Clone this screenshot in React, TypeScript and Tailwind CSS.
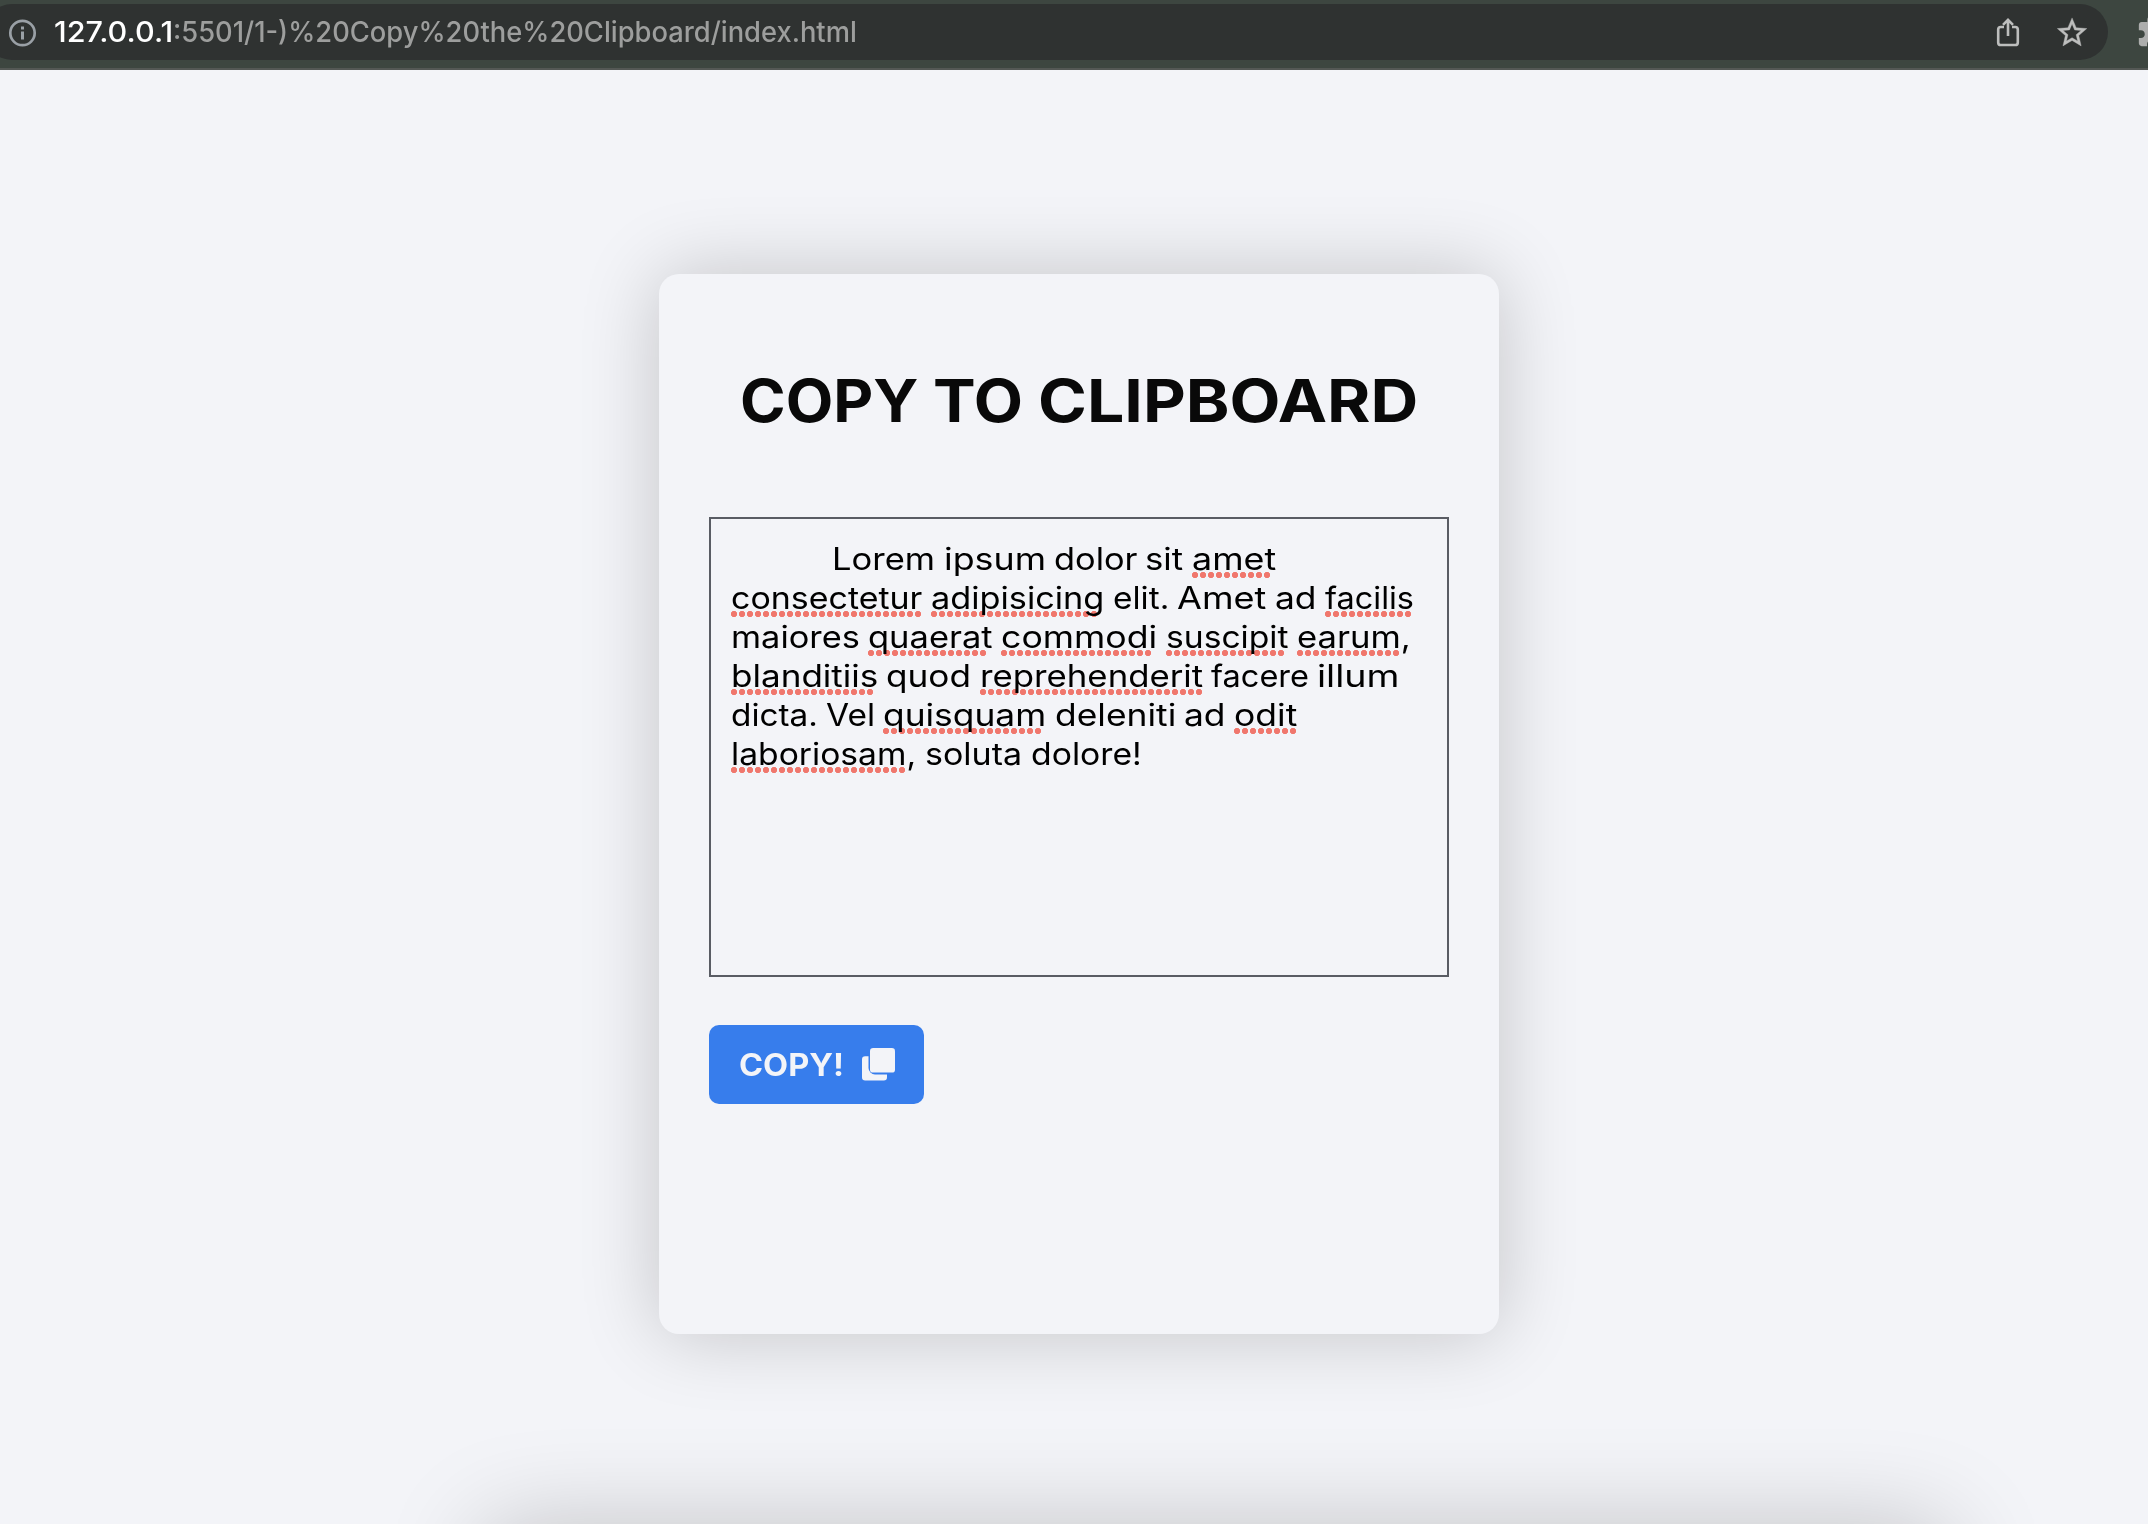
import { useLayoutEffect, useRef } from "react";

/** Text stretched horizontally so that it fills exactly `width` pixels. */
function Fit({ text, width, className = "" }: { text: string; width: number; className?: string }) {
  const ref = useRef<HTMLSpanElement>(null);
  useLayoutEffect(() => {
    const el = ref.current;
    if (!el) return;
    el.style.transform = `scaleX(${width / el.offsetWidth})`;
  }, [text, width]);
  return (
    <span className="block shrink-0" style={{ width }}>
      <span ref={ref} className={`inline-block origin-left whitespace-pre ${className}`}>
        {text}
      </span>
    </span>
  );
}

// [word, left offset inside the text column, number of spell-check dots]
type Word = [string, number, number];
type Line = { end: number; words: Word[] };

const lines: Line[] = [
  { end: 545.5, words: [["Lorem", 101, 0], ["ipsum", 213, 0], ["dolor", 323, 0], ["sit", 414.5, 0], ["amet", 461, 10]] },
  { end: 683, words: [["consectetur", 0, 24], ["adipisicing", 200, 21], ["elit.", 382, 0], ["Amet", 446.5, 0], ["ad", 544.5, 0], ["facilis", 594, 11]] },
  { end: 680, words: [["maiores", 0, 0], ["quaerat", 137, 15], ["commodi", 270, 19], ["suscipit", 435, 15], ["earum,", 566, 13]] },
  { end: 669, words: [["blanditiis", 0, 18], ["quod", 155.5, 0], ["reprehenderit", 249, 28], ["facere", 480.5, 0], ["illum", 586.5, 0]] },
  { end: 566, words: [["dicta.", 0, 0], ["Vel", 95.5, 0], ["quisquam", 152.5, 20], ["deleniti", 324, 0], ["ad", 453.5, 0], ["odit", 503, 8]] },
  { end: 411, words: [["laboriosam,", 0, 22], ["soluta", 194, 0], ["dolore!", 300, 0]] },
];

const SPACE = 8.4;

function TextLine({ line }: { line: Line }) {
  return (
    <div className="flex h-[39px]" style={{ paddingLeft: line.words[0][1] }}>
      {line.words.map(([text, x, dots], i) => {
        const next = line.words[i + 1];
        const width = next ? next[1] - x - SPACE : line.end - x;
        return (
          <span key={i} className="relative shrink-0" style={{ marginRight: next ? SPACE : 0 }}>
            <Fit text={text} width={width} />
            {dots > 0 && (
              <span
                className="absolute top-[33px] left-0 h-[6px] bg-[radial-gradient(circle_at_3px_3px,#fc7c70_2.8px,transparent_3.5px)] bg-[length:8px_6px] bg-repeat-x mix-blend-multiply"
                style={{ width: dots * 8 - 1 }}
              />
            )}
          </span>
        );
      })}
    </div>
  );
}

function AddressBar() {
  return (
    <header className="flex h-[70px] shrink-0 overflow-hidden border-b-2 border-[#545855] bg-[#3d4640] pt-1">
      <div className="-ml-[16px] flex h-14 w-[2124px] shrink-0 items-center rounded-full bg-[#2f3231] pl-[24px]">
        <svg className="h-[29px] w-[29px] shrink-0" viewBox="0 0 29 29" fill="none">
          <circle cx="14.5" cy="15" r="12.2" stroke="#9aa0a6" strokeWidth="2.7" />
          <path d="M14.5 13.500v8M14.500 8.500v3" stroke="#9aa0a6" strokeWidth="3" />
        </svg>
        <div className="ml-[17px] flex flex-1 text-[28px] leading-[34px]">
          <Fit text="127.0.0.1" width={119} className="font-medium text-white" />
          <Fit text=":5501/1-)%20Copy%20the%20Clipboard/index.html" width={684} className="font-medium text-[#9d9e9d]" />
        </div>
        <svg className="mr-[37px] h-[30px] w-[24px]" viewBox="0 0 24 30" fill="none" stroke="#bdbebd" strokeWidth="2.6">
          <path d="M8 10H4.8a2.600 2.600 0 0 0-2.600 2.600v12.800a2.600 2.600 0 0 0 2.600 2.600h14.400a2.600 2.600 0 0 0 2.600-2.600V12.600a2.600 2.600 0 0 0-2.600-2.600H16" />
          <path d="M12 19V3M7 7.800l5-5 5 5" />
        </svg>
        <svg className="mr-[20px] h-[31px] w-[31px]" viewBox="1.800 1.400 21 21" fill="#bdbebd" stroke="#bdbebd" strokeWidth="0.25">
          <path d="M22 9.24l-7.19-.62L12 2 9.19 8.63 2 9.24l5.46 4.73L5.82 21 12 17.27 18.18 21l-1.63-7.03L22 9.24zM12 15.4l-3.76 2.27 1-4.28-3.32-2.88 4.38-.38L12 6.1l1.71 4.04 4.38.38-3.32 2.88 1 4.28L12 15.4z" />
        </svg>
      </div>
      <svg className="mt-[11px] ml-[28px] h-[34px] w-[34px] shrink-0" viewBox="0 0 24 24" fill="#adaead">
        <path d="M20.5 11H19V7c0-1.1-.9-2-2-2h-4V3.5a2.5 2.5 0 0 0-5 0V5H4c-1.1 0-1.99.9-1.99 2v3.8H3.5c1.49 0 2.7 1.21 2.7 2.7s-1.21 2.7-2.7 2.7H2V20c0 1.1.9 2 2 2h3.8v-1.5c0-1.49 1.21-2.7 2.7-2.7s2.7 1.21 2.7 2.7V22H17c1.1 0 2-.9 2-2v-4h1.5a2.5 2.5 0 0 0 0-5z" />
      </svg>
    </header>
  );
}

export default function App() {
  return (
    <div className="relative flex h-[1524px] w-[2148px] flex-col overflow-hidden bg-[#f3f4f8] font-['Inter',sans-serif]">
      <AddressBar />
      <main className="flex justify-center pt-[204px] pl-[10px]">
        <section className="flex h-[1060px] w-[840px] flex-col rounded-[20px] bg-[#f3f4f8] px-[50px] pt-[91px] shadow-[0_0_80px_rgba(0,0,0,0.2)]">
          <h1 className="flex pl-[31px] text-[59px] leading-[72px] font-[750] text-[#090909]">
            <Fit text="COPY" width={178} />
            <span className="w-[15px]" />
            <Fit text="TO" width={90} />
            <span className="w-[15px]" />
            <Fit text="CLIPBOARD" width={380} />
          </h1>
          <div className="mt-[80px] h-[460px] border-2 border-[#595c64] p-5 text-[31px] leading-[39px] text-black">
            {lines.map((line, i) => (
              <TextLine key={i} line={line} />
            ))}
          </div>
          <button className="mt-12 flex h-[79px] w-[215px] items-center rounded-[10px] bg-[#377dec] pl-[28px] text-[31px] leading-[39px] font-bold text-[#f3f4f8]">
            <Fit text="COPY!" width={105} />
            <svg className="ml-5 h-[33px] w-[33px]" viewBox="0 0 33 33" fill="currentColor">
              <rect x="8" y="0" width="25" height="24.6" rx="3.2" />
              <path d="M6.5 8.2H3.2A3.2 3.2 0 0 0 0 11.4v17.8a3.2 3.2 0 0 0 3.2 3.2h18.6a3.2 3.2 0 0 0 3.2-3.2v-2.8H13A6.5 6.5 0 0 1 6.5 20z" />
            </svg>
          </button>
        </section>
      </main>
      <div className="absolute top-[1529px] left-[484px] h-[300px] w-[1464px] rounded-[20px] shadow-[0_0_100px_rgba(0,0,0,0.22)]" />
    </div>
  );
}
